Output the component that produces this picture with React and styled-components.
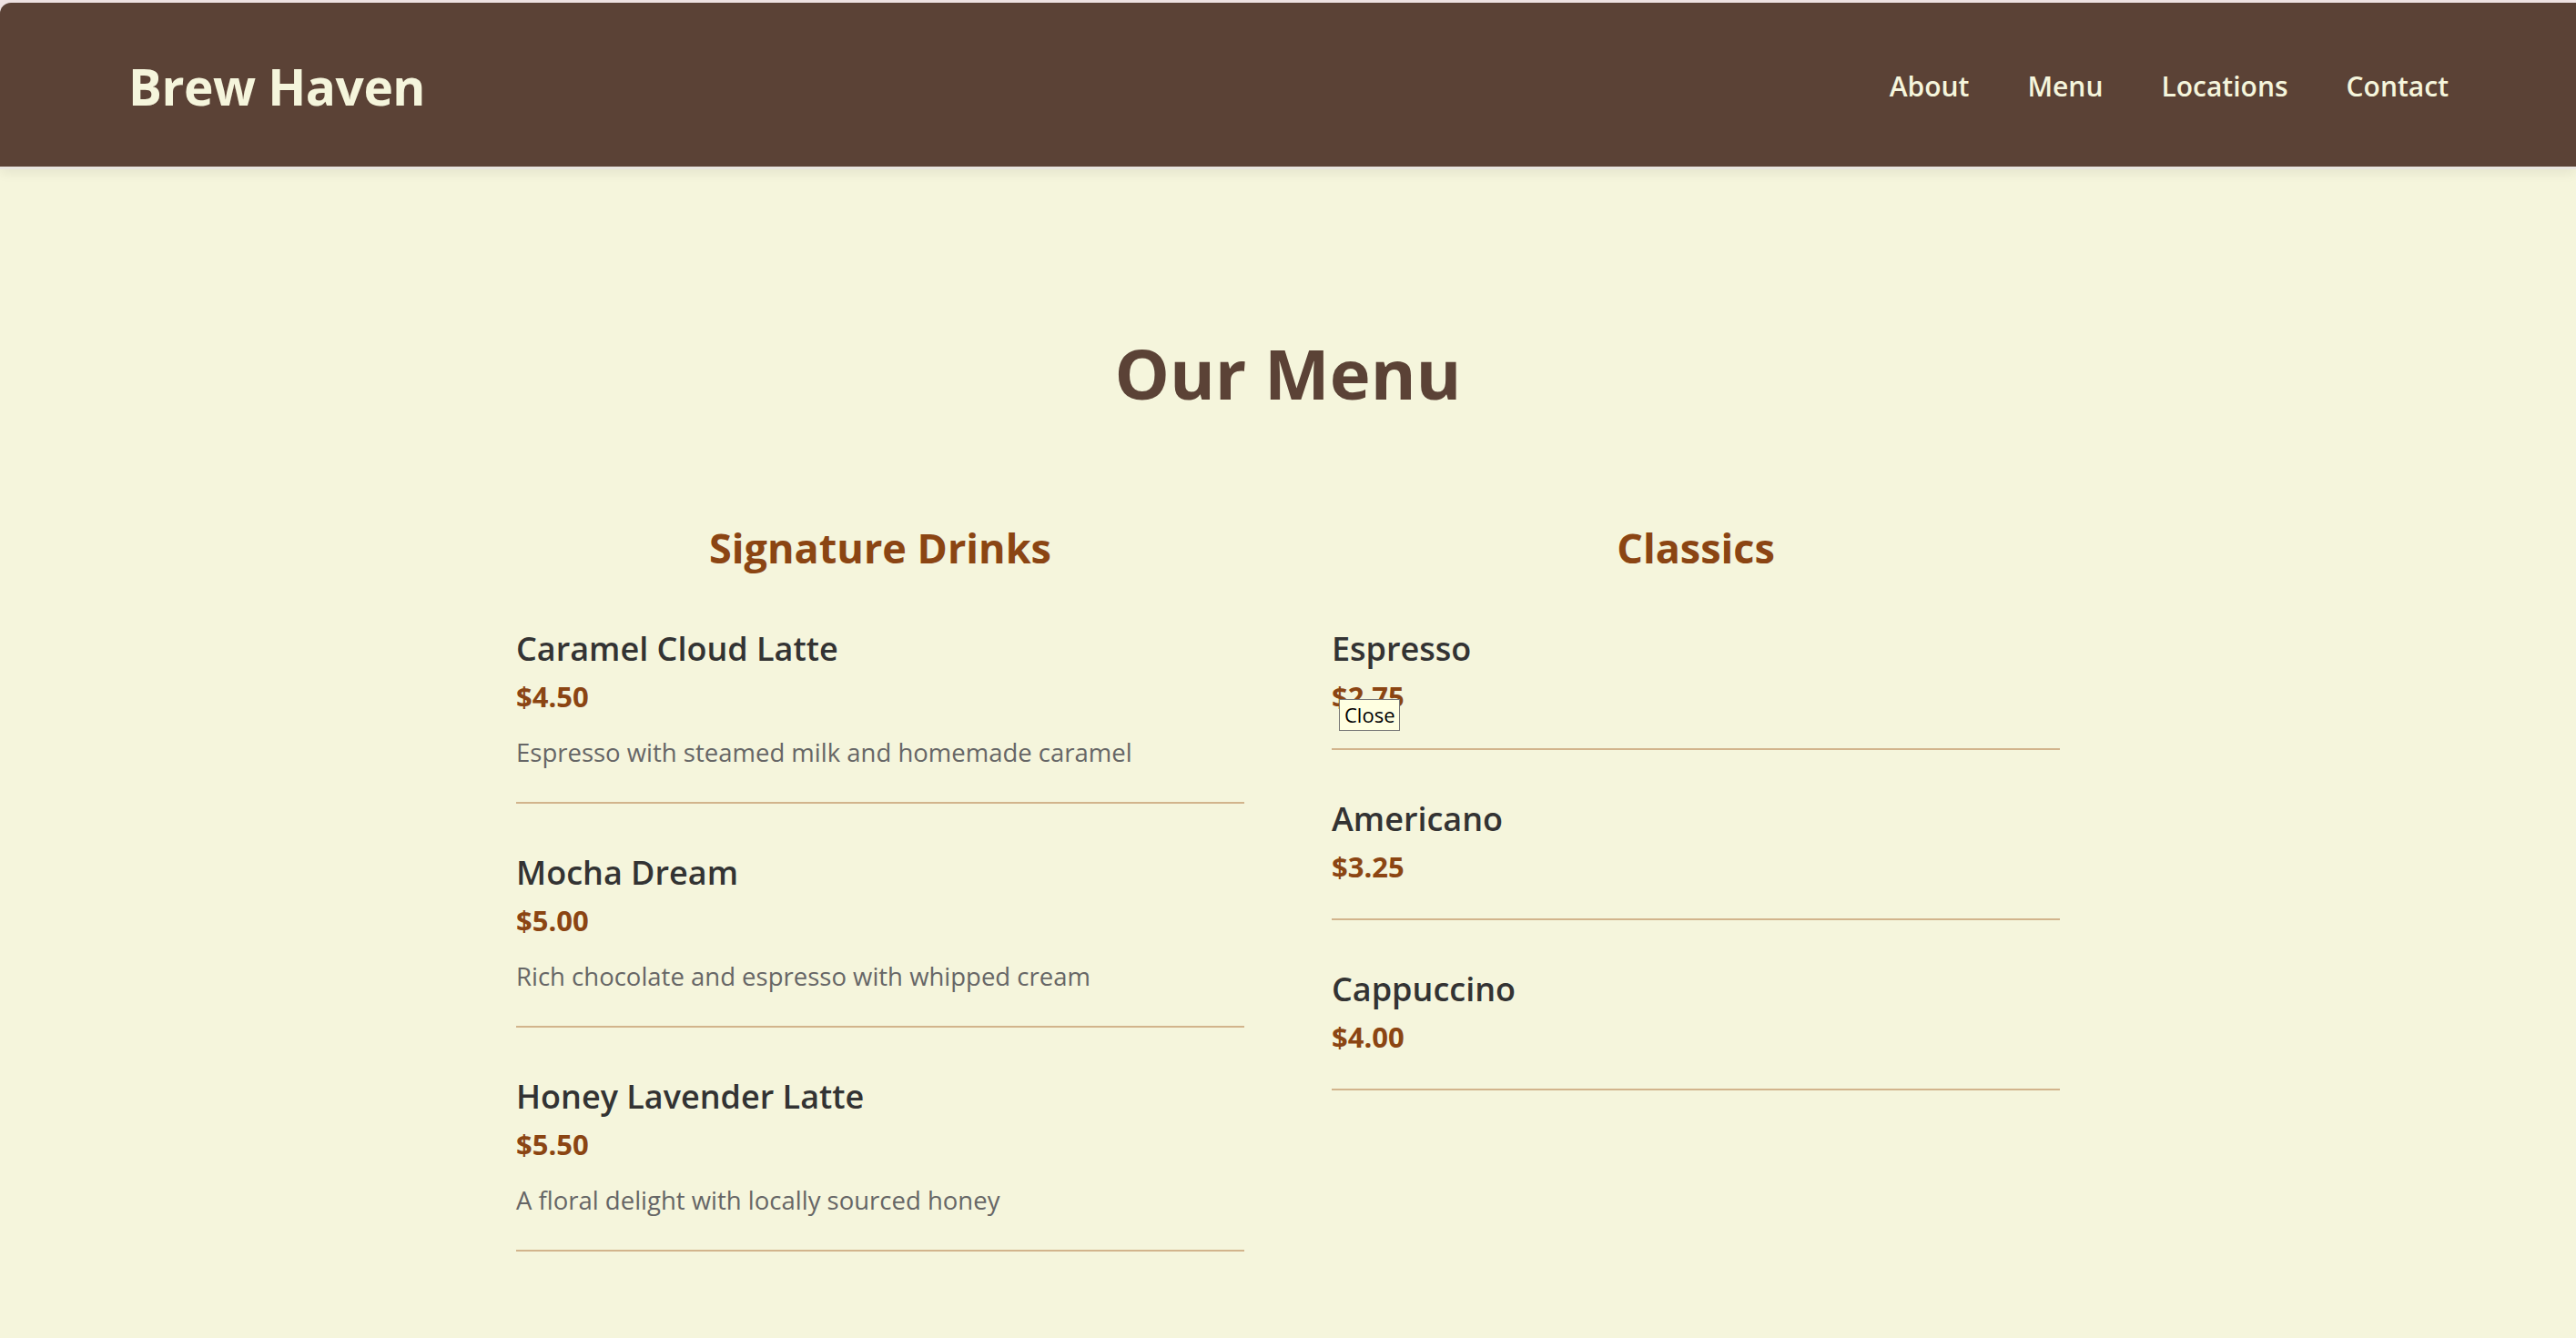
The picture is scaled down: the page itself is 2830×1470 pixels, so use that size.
import React from "react";
import styled, { createGlobalStyle } from "styled-components";

const cream = "#f5f5dc";
const brown = "#5b4236";
const saddle = "#8b4513";
const tan = "#d2b48c";

const GlobalStyle = createGlobalStyle`
  html, body {
    margin: 0;
    padding: 0;
    background: ${cream};
  }
  body {
    font-family: "Open Sans", "Noto Sans", sans-serif;
    min-height: 1470px;
  }
  * {
    box-sizing: border-box;
  }
`;

const Page = styled.div`
  min-height: 1470px;
  background: ${cream};
`;

// thin light strip above the header, like the frame in the shot
const HeaderFrame = styled.div`
  padding-top: 3px;
  background: #f0e4e4;
  position: relative;
  z-index: 1;
`;

const Header = styled.header`
  height: 180px;
  padding: 3px 140px 0 141px;
  display: flex;
  align-items: center;
  justify-content: space-between;
  background: ${brown};
  border-top-left-radius: 12px;
  box-shadow: 0 3px 0 #e9e5df, 0 6px 14px rgba(0, 0, 0, 0.08);
`;

const Logo = styled.div`
  color: ${cream};
  font-size: 55px;
  font-weight: 700;
  line-height: 70px;
  letter-spacing: -0.5px;
`;

const Nav = styled.nav`
  display: flex;
  gap: 64px;
`;

const NavLink = styled.a`
  color: ${cream};
  font-size: 30px;
  font-weight: 600;
  line-height: 40px;
  text-decoration: none;
  cursor: pointer;
`;

const Main = styled.main`
  padding-top: 179px;
`;

const Title = styled.h1`
  margin: 0 0 114px;
  text-align: center;
  color: ${brown};
  font-size: 76px;
  font-weight: 700;
  line-height: 96px;
`;

const Columns = styled.div`
  max-width: 1696px;
  margin: 0 auto;
  display: grid;
  grid-template-columns: 1fr 1fr;
  gap: 96px;
`;

const Category = styled.section``;

const CategoryTitle = styled.h2`
  margin: 0 0 58px;
  text-align: center;
  color: ${saddle};
  font-size: 45px;
  font-weight: 700;
  line-height: 60px;
`;

const Item = styled.div`
  position: relative;
  padding-bottom: 38px;
  margin-bottom: 53px;
  border-bottom: 2px solid ${tan};
`;

const ItemName = styled.h3`
  margin: 0 0 10px;
  color: #333;
  font-size: 36px;
  font-weight: 600;
  line-height: 46px;
`;

const Price = styled.div`
  color: ${saddle};
  font-size: 31px;
  font-weight: 700;
  line-height: 38px;
`;

const Description = styled.p`
  margin: 26px 0 0;
  color: #666;
  font-size: 27.5px;
  line-height: 33px;
`;

// native-looking title tooltip hovering over the espresso price
const Tooltip = styled.div`
  position: absolute;
  top: 78px;
  left: 8px;
  padding: 2px 5px;
  background: #ffffe1;
  border: 1px solid #767676;
  color: #000;
  font-size: 22px;
  line-height: 29px;
`;

const menu = [
  {
    title: "Signature Drinks",
    items: [
      { name: "Caramel Cloud Latte", price: "$4.50", desc: "Espresso with steamed milk and homemade caramel" },
      { name: "Mocha Dream", price: "$5.00", desc: "Rich chocolate and espresso with whipped cream" },
      { name: "Honey Lavender Latte", price: "$5.50", desc: "A floral delight with locally sourced honey" }
    ]
  },
  {
    title: "Classics",
    items: [
      { name: "Espresso", price: "$2.75", tip: "Close" },
      { name: "Americano", price: "$3.25" },
      { name: "Cappuccino", price: "$4.00" }
    ]
  }
];

const App = () => {
  return (
    <Page>
      <GlobalStyle />
      <HeaderFrame>
        <Header>
          <Logo>Brew Haven</Logo>
          <Nav>
            <NavLink>About</NavLink>
            <NavLink>Menu</NavLink>
            <NavLink>Locations</NavLink>
            <NavLink>Contact</NavLink>
          </Nav>
        </Header>
      </HeaderFrame>
      <Main>
        <Title>Our Menu</Title>
        <Columns>
          {menu.map(cat => (
            <Category key={cat.title}>
              <CategoryTitle>{cat.title}</CategoryTitle>
              {cat.items.map(item => (
                <Item key={item.name}>
                  <ItemName>{item.name}</ItemName>
                  <Price>{item.price}</Price>
                  {item.desc && <Description>{item.desc}</Description>}
                  {item.tip && <Tooltip>{item.tip}</Tooltip>}
                </Item>
              ))}
            </Category>
          ))}
        </Columns>
      </Main>
    </Page>
  );
};

export default App;
